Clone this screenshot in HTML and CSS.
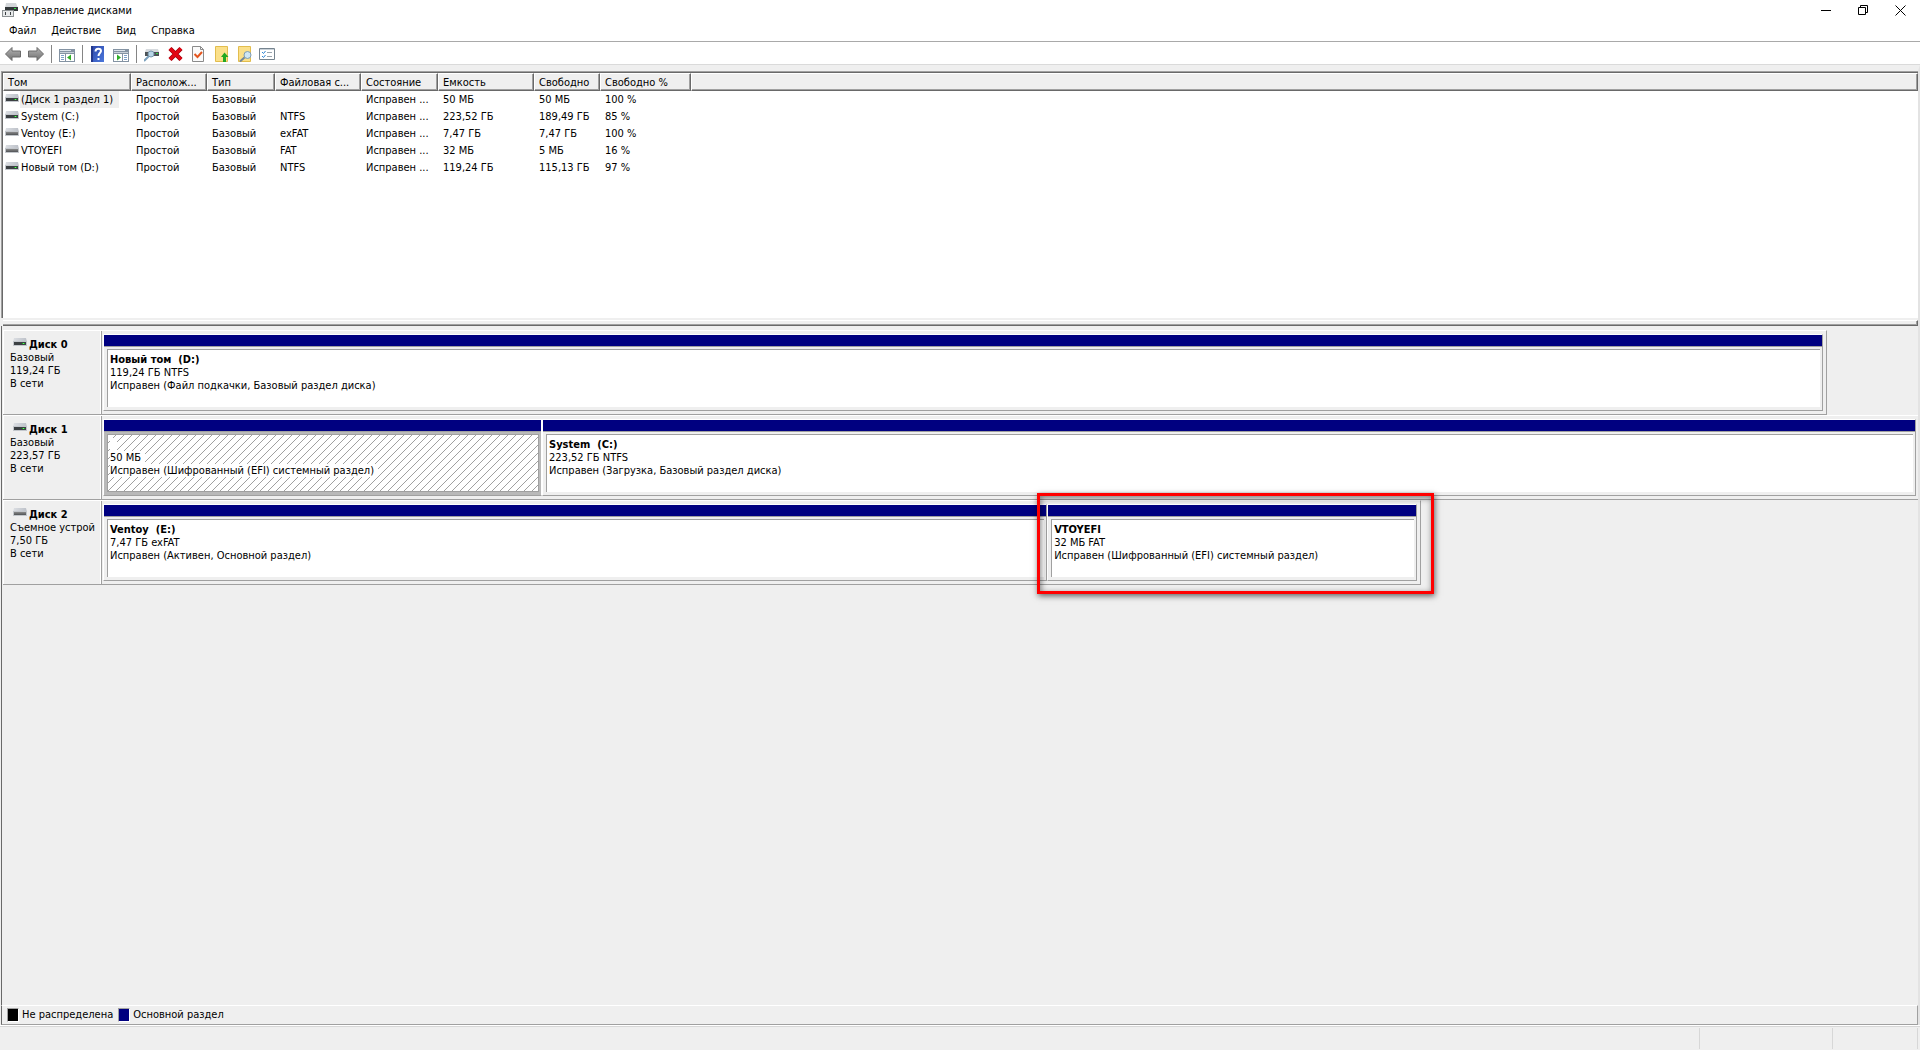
FILE: index.html
```html
<!DOCTYPE html>
<html lang="ru">
<head>
<meta charset="utf-8">
<title>Управление дисками</title>
<link rel="stylesheet" href="styles.css">
</head>
<body>
<svg class="defs" width="0" height="0" aria-hidden="true">
  <defs>
    <linearGradient id="top-face" x1="0" y1="0" x2="1" y2="0"><stop offset="0" stop-color="#dcdfe3"/><stop offset="1" stop-color="#bcc0c8"/></linearGradient>
    <linearGradient id="front-face" x1="0" y1="0" x2="0" y2="1"><stop offset="0" stop-color="#8a8a8a"/><stop offset="1" stop-color="#505356"/></linearGradient>
    <linearGradient id="arrow-fill" x1="0" y1="0" x2="0" y2="1"><stop offset="0" stop-color="#b5b5b5"/><stop offset="1" stop-color="#6f6f6f"/></linearGradient>
    <linearGradient id="help-fill" x1="0" y1="0" x2="1" y2="1"><stop offset="0" stop-color="#2c45a8"/><stop offset="1" stop-color="#4b78dc"/></linearGradient>
    <symbol id="drive" viewBox="0 0 14 8">
      <path d="M1 0h12l1 4H0z" fill="url(#top-face)"/>
      <path d="M0 3h14v5H0z" fill="#c3c7cc"/>
      <path d="M1 4h12v3H1z" fill="#3c4043"/>
      <path d="M9 5h3v1H9z" fill="#1fa62b"/><path d="M10 5h1v1h-1z" fill="#5cff5c"/>
    </symbol>
    <symbol id="removable" viewBox="0 0 14 8">
      <path d="M1 0h12l1 4H0z" fill="url(#top-face)"/>
      <path d="M0 3h14v5H0z" fill="#c3c7cc"/>
      <path d="M1 4h12v3H1z" fill="url(#front-face)"/>
    </symbol>
  </defs>
</svg>

<header class="titlebar">
  <svg class="app-icon" width="16" height="16" viewBox="0 0 16 16" aria-hidden="true">
    <path d="M4 1h10l2 5H3z" fill="#d3d6d9"/><path d="M3 5h13v4H3z" fill="#33383a"/><path d="M12 6h2v1h-2z" fill="#30e040"/>
    <path d="M0 8h12v7H0z" fill="#8d9294"/><path d="M1 9h10v5H1z" fill="#e8eaeb"/><path d="M3 10h1v3H3zM8 10h1v3H8z" fill="#3a3f42"/>
  </svg>
  <h1 class="title">Управление дисками</h1>
  <div class="window-buttons">
    <button type="button" aria-label="Свернуть"><svg width="11" height="11" viewBox="0 0 11 11"><path d="M0 5h10v1H0z"/></svg></button>
    <button type="button" aria-label="Восстановить"><svg width="11" height="11" viewBox="0 0 11 11"><path d="M.5 2.500h7v7h-7zM2.500 2.500v-2h7v7h-2" fill="none" stroke="#000"/></svg></button>
    <button type="button" aria-label="Закрыть"><svg width="11" height="11" viewBox="0 0 11 11"><path d="M.5.5l10 10M10.500.5l-10 10" fill="none" stroke="#000"/></svg></button>
  </div>
</header>

<nav class="menubar">
  <button type="button">Файл</button>
  <button type="button">Действие</button>
  <button type="button">Вид</button>
  <button type="button">Справка</button>
</nav>

<div class="toolbar" role="toolbar" aria-label="Панель инструментов">
  <button type="button" aria-label="Назад"><svg viewBox="0 0 16 16"><path d="M.5 8L7 1.500V5h8.500v6H7v3.500z" fill="url(#arrow-fill)" stroke="#6b6b6b"/></svg></button>
  <button type="button" aria-label="Вперед"><svg viewBox="0 0 16 16"><path d="M15.500 8L9 1.500V5H.5v6H9v3.500z" fill="url(#arrow-fill)" stroke="#6b6b6b"/></svg></button>
  <span class="separator"></span>
  <button type="button" aria-label="Дерево консоли"><svg viewBox="0 0 16 16"><path d="M0 3h16v13H0z" fill="#8493a3"/><path d="M1 4h11v1H1z" fill="#dce3ea"/><path d="M1 6h14v1H1z" fill="#c8d0d8"/><path d="M1 8h5v7H1zM7 8h8v7H7z" fill="#fff"/><path d="M2 9h3v1H2zM2 11h3v1H2zM2 13h3v1H2z" fill="#7da0c8"/><path d="M12 8.500v6L8 11.500z" fill="#2fae28"/></svg></button>
  <span class="separator"></span>
  <button type="button" aria-label="Справка"><svg viewBox="0 0 16 16"><path d="M1 0h13v16H1z" fill="url(#help-fill)"/><path d="M1 0h2v16H1z" fill="#24388c"/><path d="M5.500 5.500C5.500 1.500 11 2 11 5c0 2-2.500 2.200-2.500 5" fill="none" stroke="#fff" stroke-width="2"/><path d="M7.500 12h2v2h-2z" fill="#fff"/></svg></button>
  <button type="button" aria-label="Панель действий"><svg viewBox="0 0 16 16"><path d="M0 3h16v13H0z" fill="#8493a3"/><path d="M1 4h11v1H1z" fill="#dce3ea"/><path d="M1 6h14v1H1z" fill="#c8d0d8"/><path d="M1 8h8v7H1zM10 8h5v7h-5z" fill="#fff"/><path d="M11 9h3v1h-3zM11 11h3v1h-3zM11 13h3v1h-3z" fill="#7da0c8"/><path d="M4 8.500v6l4-3z" fill="#2fae28"/></svg></button>
  <span class="separator"></span>
  <button type="button" aria-label="Повторить проверку дисков"><svg viewBox="0 0 16 16"><path d="M2 3h12l1 3H1z" fill="#d6dade"/><path d="M1 6h14v4H1z" fill="#4c5256"/><path d="M12 7h2v1h-2z" fill="#30d840"/><path d="M5 10l-5 5" stroke="#7ba0bc" stroke-width="2"/><circle cx="7" cy="8" r="3" fill="#b9d6e8" stroke="#7897ad"/></svg></button>
  <button type="button" aria-label="Удалить"><svg viewBox="0 0 16 16"><path d="M3 2.500l11 11M14 2.500l-11 11" stroke="#a4000c" stroke-width="4.500"/><path d="M3 2.500l11 11M14 2.500l-11 11" stroke="#e30613" stroke-width="3"/></svg></button>
  <button type="button" aria-label="Свойства"><svg viewBox="0 0 16 16"><path d="M2.500.5h8l3 3v12h-11z" fill="#fafafa" stroke="#8b8b8b"/><path d="M10.500.5v3h3" fill="none" stroke="#8b8b8b"/><path d="M4.500 8l3 3L12 6" fill="none" stroke="#e4561f" stroke-width="2"/></svg></button>
  <button type="button" aria-label="Открыть"><svg viewBox="0 0 16 16"><path d="M2.500.5h12v15h-12z" fill="#fbe08a" stroke="#e2bd4e"/><path d="M10 16V11H8l3.500-4.500L15.500 11H13v5z" fill="#22a822"/></svg></button>
  <button type="button" aria-label="Найти"><svg viewBox="0 0 16 16"><path d="M2.500.5h12v15h-12z" fill="#fbe08a" stroke="#e2bd4e"/><path d="M9 11l-5 4.500" stroke="#74879a" stroke-width="2"/><circle cx="11.500" cy="9" r="3.500" fill="#cfe6f5" stroke="#7d9cb4"/></svg></button>
  <button type="button" aria-label="Список"><svg viewBox="0 0 16 16"><path d="M.5 2.500h15v11H.5z" fill="#fff" stroke="#76848f"/><path d="M1 3h14v1H1z" fill="#c9d1d8"/><path d="M3 6l1.500 1.500L6.500 5M3 10l1.500 1.500L6.500 9" fill="none" stroke="#2f86d4"/><path d="M8 6h5v1H8zM8 10h5v1H8z" fill="#9aa5ae"/></svg></button>
</div>

<main class="workspace">
  <section class="volumes">
    <table>
      <colgroup><col class="c-name"><col class="c-layout"><col class="c-type"><col class="c-fs"><col class="c-state"><col class="c-size"><col class="c-free"><col class="c-percent"><col></colgroup>
      <thead><tr><th>Том</th><th>Располож...</th><th>Тип</th><th>Файловая с...</th><th>Состояние</th><th>Емкость</th><th>Свободно</th><th>Свободно %</th><th></th></tr></thead>
      <tbody>
        <tr><td class="name"><svg class="disk-icon"><use href="#drive"/></svg><span class="picked">(Диск 1 раздел 1)</span></td><td>Простой</td><td>Базовый</td><td></td><td>Исправен ...</td><td>50 МБ</td><td>50 МБ</td><td>100 %</td><td></td></tr>
        <tr><td class="name"><svg class="disk-icon"><use href="#drive"/></svg><span>System (C:)</span></td><td>Простой</td><td>Базовый</td><td>NTFS</td><td>Исправен ...</td><td>223,52 ГБ</td><td>189,49 ГБ</td><td>85 %</td><td></td></tr>
        <tr><td class="name"><svg class="disk-icon"><use href="#removable"/></svg><span>Ventoy (E:)</span></td><td>Простой</td><td>Базовый</td><td>exFAT</td><td>Исправен ...</td><td>7,47 ГБ</td><td>7,47 ГБ</td><td>100 %</td><td></td></tr>
        <tr><td class="name"><svg class="disk-icon"><use href="#removable"/></svg><span>VTOYEFI</span></td><td>Простой</td><td>Базовый</td><td>FAT</td><td>Исправен ...</td><td>32 МБ</td><td>5 МБ</td><td>16 %</td><td></td></tr>
        <tr><td class="name"><svg class="disk-icon"><use href="#drive"/></svg><span>Новый том (D:)</span></td><td>Простой</td><td>Базовый</td><td>NTFS</td><td>Исправен ...</td><td>119,24 ГБ</td><td>115,13 ГБ</td><td>97 %</td><td></td></tr>
      </tbody>
    </table>
  </section>
  <div class="splitter"></div>

  <section class="disks">
    <article class="disk">
      <div class="disk-body" style="width:95.25%">
        <div class="disk-label"><h2><svg class="disk-icon"><use href="#drive"/></svg>Диск 0</h2><p>Базовый</p><p>119,24 ГБ</p><p>В сети</p></div>
        <div class="partitions">
          <div class="partition" style="flex-grow:1720"><div class="bar"></div><div class="info"><h3>Новый том&nbsp; (D:)</h3><p>119,24 ГБ NTFS</p><p>Исправен (Файл подкачки, Базовый раздел диска)</p></div></div>
        </div>
      </div>
    </article>
    <article class="disk framed">
      <div class="disk-body">
        <div class="disk-label"><h2><svg class="disk-icon"><use href="#drive"/></svg>Диск 1</h2><p>Базовый</p><p>223,57 ГБ</p><p>В сети</p></div>
        <div class="partitions">
          <div class="partition selected" style="flex-grow:438"><div class="bar"></div><div class="info"><h3>&nbsp;</h3><p>50 МБ</p><p>Исправен (Шифрованный (EFI) системный раздел)</p></div></div>
          <div class="partition" style="flex-grow:1375"><div class="bar"></div><div class="info"><h3>System&nbsp; (C:)</h3><p>223,52 ГБ NTFS</p><p>Исправен (Загрузка, Базовый раздел диска)</p></div></div>
        </div>
      </div>
    </article>
    <article class="disk">
      <div class="disk-body" style="width:74.05%">
        <div class="disk-label"><h2><svg class="disk-icon"><use href="#removable"/></svg>Диск 2</h2><p>Съемное устрой</p><p>7,50 ГБ</p><p>В сети</p></div>
        <div class="partitions">
          <div class="partition" style="flex-grow:945"><div class="bar"></div><div class="info"><h3>Ventoy&nbsp; (E:)</h3><p>7,47 ГБ exFAT</p><p>Исправен (Активен, Основной раздел)</p></div></div>
          <div class="partition" style="flex-grow:369"><div class="bar"></div><div class="info"><h3>VTOYEFI</h3><p>32 МБ FAT</p><p>Исправен (Шифрованный (EFI) системный раздел)</p></div><div class="callout"></div></div>
        </div>
      </div>
    </article>
  </section>

  <ul class="legend">
    <li><span class="swatch unallocated"></span>Не распределена</li>
    <li><span class="swatch primary"></span>Основной раздел</li>
  </ul>
</main>

<footer class="statusbar"><span class="pane"></span><span class="pane middle"></span><span class="pane last"></span></footer>
</body>
</html>
```
FILE: styles.css
```css
:root {
  --face: #efefef;
  --shade: #a0a0a0;
  --dark: #696969;
  --navy: #000080;
}
* { box-sizing: border-box; }
body {
  margin: 0;
  min-height: 100vh;
  display: flex;
  flex-direction: column;
  background: #fff;
  color: #000;
  font: 11px/13px "DejaVu Sans Condensed", Tahoma, "Noto Sans", sans-serif;
}
h1, h2, h3, p, ul { margin: 0; padding: 0; font-size: 11px; }
h1 { font-weight: normal; }
button { border: 0; padding: 0; background: none; font: inherit; color: inherit; }
svg { display: block; }
.defs { position: absolute; }

.titlebar { display: flex; align-items: center; height: 20px; padding-left: 2px; }
.title { flex: 1; padding-left: 4px; }
.window-buttons { display: flex; gap: 26px; padding-right: 14px; height: 17px; align-items: center; }
.menubar { display: flex; gap: 15px; height: 21px; padding-left: 9px; }

.toolbar {
  display: flex;
  align-items: center;
  gap: 7px;
  height: 24px;
  padding: 2px 0 0 5px;
  border-top: 1px solid #a9a9a9;
  border-bottom: 1px solid #dadada;
}
.toolbar button, .toolbar svg { width: 16px; height: 16px; }
.separator { width: 1px; height: 18px; background: #858585; }

.workspace {
  flex: 1;
  display: flex;
  flex-direction: column;
  background: var(--face);
  border-top: 6px solid var(--face);
  border-right: 2px solid #e3e3e3;
}
.volumes {
  height: 247px;
  background: #fff;
  border: solid var(--shade);
  border-width: 1px 0 0 1px;
  box-shadow: inset 1px 1px var(--dark);
  padding: 1px 0 0 1px;
  margin-left: 1px;
}
table { width: 100%; table-layout: fixed; border-collapse: separate; border-spacing: 0; }
.c-name { width: 128px; }
.c-layout { width: 76px; }
.c-type { width: 68px; }
.c-fs { width: 86px; }
.c-state { width: 77px; }
.c-size { width: 96px; }
.c-free { width: 66px; }
.c-percent { width: 91px; }
th {
  height: 18px;
  padding: 0 0 0 4px;
  text-align: left;
  font-weight: normal;
  white-space: nowrap;
  background: var(--face);
  border: solid;
  border-width: 1px;
  border-color: #fff var(--dark) var(--dark) #fff;
  box-shadow: inset -1px -1px var(--shade);
}
td { height: 17px; padding: 0 0 0 5px; white-space: nowrap; }
.name { display: flex; align-items: center; gap: 1px; padding-left: 2px; }
.name span { padding: 2px 6px 2px 1px; }
.name .picked { background: var(--face); }
.disk-icon { width: 14px; height: 8px; flex: none; }
.name .disk-icon { margin-bottom: 4px; }

.splitter {
  height: 6px;
  margin: 2px 0 0 3px;
  border: solid;
  border-width: 1px 1px 1px 0;
  border-color: #fff var(--dark) var(--dark);
  box-shadow: inset -1px -1px var(--shade);
}
.disks {
  flex: 1;
  padding: 4px 0 0 1px;
  margin-left: 1px;
  border-left: 1px solid var(--dark);
}
.disk-body { display: flex; height: 85px; border: solid var(--shade); border-width: 1px 1px 1px 0; border-top-color: #fff; }
.framed .disk-body { border-right: 0; }
.disk-label {
  flex: none;
  width: 99px;
  padding: 7px 6px 0 7px;
  border-right: 1px solid var(--shade);
  box-shadow: inset -1px 0 #fff, inset 1px 0 #fff;
}
.disk-label h2 { display: flex; gap: 2px; padding-left: 3px; }
.disk-label p { white-space: nowrap; }
.partitions { flex: 1; display: flex; padding: 3px 3px 3px 1px; }
.framed .partitions { padding-right: 2px; }
.partition {
  position: relative;
  flex: 1 1 0;
  min-width: 0;
  display: flex;
  flex-direction: column;
  border: 1px solid;
  border-color: #fff var(--shade) var(--shade) #fff;
}
.bar { height: 12px; background: var(--navy); border-bottom: 1px solid var(--shade); }
.info {
  flex: 1;
  margin: 2px 2px 3px 3px;
  padding: 3px 0 0 2px;
  background: #fff;
  border: solid var(--shade);
  border-width: 1px 0 0 1px;
  white-space: nowrap;
  overflow: hidden;
}
.selected { background: #b9b9b9; border-right-color: #fff; }
.selected .info {
  border-width: 1px;
  background: #fff url("data:image/svg+xml,%3Csvg xmlns='http://www.w3.org/2000/svg' width='8' height='8'%3E%3Cpath fill='%23a0a0a0' d='M0 7h1v1H0zM1 6h1v1H1zM2 5h1v1H2zM3 4h1v1H3zM4 3h1v1H4zM5 2h1v1H5zM6 1h1v1H6zM7 0h1v1H7z'/%3E%3C/svg%3E");
}
.selected h3, .selected p { width: max-content; padding-right: 4px; background: #fff; }
.callout {
  position: absolute;
  inset: -12px -18px -14px -11px;
  border: 3px solid #f00;
  box-shadow: 1px 2px 6px rgba(0, 0, 0, .6), inset 1px 2px 6px rgba(0, 0, 0, .5);
}

.legend {
  display: flex;
  gap: 5px;
  list-style: none;
  height: 20px;
  margin-left: 1px;
  padding: 2px 0 0 5px;
  border: 1px solid var(--shade);
  border-top-color: #fff;
  border-left-color: var(--dark);
}
.legend li { display: flex; gap: 3px; line-height: 14px; }
.swatch { width: 12px; height: 14px; border: 1px solid; border-color: var(--shade) #fff #fff var(--shade); }
.unallocated { background: #000; }
.primary { background: var(--navy); }

.statusbar {
  display: flex;
  height: 25px;
  padding: 2px 2px 1px 0;
  background: var(--face);
  border-top: 1px solid #fff;
  box-shadow: inset 0 1px #d7d7d7;
}
.pane { flex: 1; border-right: 1px solid #d7d7d7; }
.pane.middle { flex: 0 0 133px; }
.pane.last { flex: 0 0 85px; }
```
